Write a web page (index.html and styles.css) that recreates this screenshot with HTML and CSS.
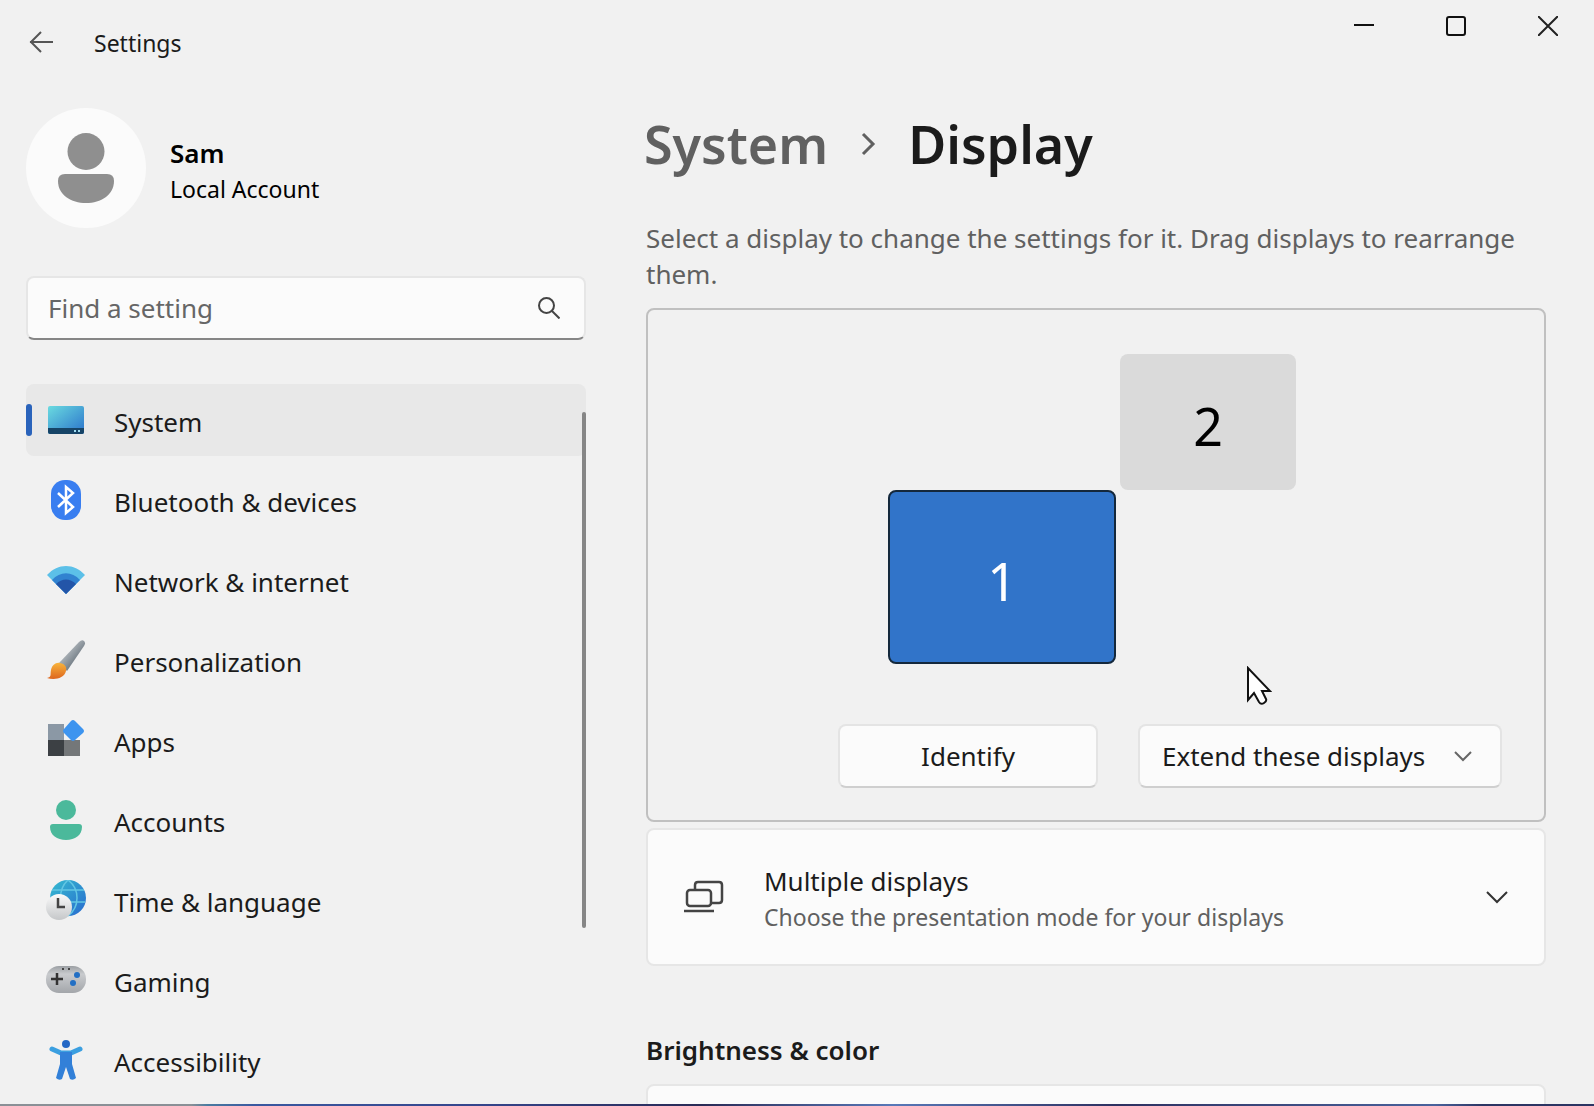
FILE: index.html
```html
<!DOCTYPE html>
<html lang="en">
<head>
    <meta charset="UTF-8">
    <meta name="viewport" content="width=device-width, initial-scale=1.0">
    <title>Settings</title>
    <link rel="stylesheet" href="styles.css">
</head>
<body>

<div class="window">
    <header class="titlebar">
        <button class="back" aria-label="Back">
            <svg width="26" height="24" viewBox="0 0 26 24"><path d="M25 12H2M13 2L3 12l10 10" fill="none" stroke="#555" stroke-width="2"/></svg>
        </button>
        <span class="title">Settings</span>
        <div class="caption">
            <button aria-label="Minimize"><svg width="20" height="20" viewBox="0 0 20 20"><path d="M0 9h20" stroke="#111" stroke-width="2"/></svg></button>
            <button aria-label="Maximize"><svg width="20" height="20" viewBox="0 0 20 20"><rect x="1" y="1" width="18" height="18" rx="2" fill="none" stroke="#111" stroke-width="2"/></svg></button>
            <button aria-label="Close"><svg width="20" height="20" viewBox="0 0 20 20"><path d="M0 0l20 20M20 0L0 20" stroke="#222" stroke-width="2"/></svg></button>
        </div>
    </header>

    <div class="content">
        <aside class="sidebar">
            <div class="account">
                <div class="avatar">
                    <svg width="56" height="70" viewBox="0 0 56 70" fill="#8f8f8f"><circle cx="28" cy="18.500" r="18.500"/><path d="M7 41h42q7 0 7 7c0 14-13 22-28 22S0 62 0 48q0-7 7-7z"/></svg>
                </div>
                <div class="who">
                    <div class="name">Sam</div>
                    <div class="kind">Local Account</div>
                </div>
            </div>

            <div class="search">
                <input type="text" aria-label="Find a setting" placeholder="Find a setting">
                <svg width="22" height="22" viewBox="0 0 22 22" fill="none" stroke="#444" stroke-width="2"><circle cx="8.500" cy="8.500" r="7.500"/><path d="M14 14l7.500 7.500"/></svg>
            </div>

            <nav class="nav">
                <a class="active" href="#system">
                    <svg class="icon" viewBox="0 0 40 40">
                        <defs><linearGradient id="screen" x1="0" y1="0" x2="1" y2="1"><stop offset="0" stop-color="#6adbe0"/><stop offset="1" stop-color="#2a72cb"/></linearGradient></defs>
                        <rect x="2" y="6" width="36" height="28" rx="2" fill="url(#screen)"/>
                        <path d="M2 28h36v4q0 2-2 2H4q-2 0-2-2z" fill="#164467"/>
                        <path d="M28 30h2v2h-2zM32 30h2v2h-2z" fill="#9edcf0"/>
                    </svg>
                    System
                </a>
                <a href="#bluetooth">
                    <svg class="icon" viewBox="0 0 40 40">
                        <rect x="5" y="0" width="30" height="40" rx="14" fill="#397ef0"/>
                        <path d="M12 13l15 14-7 6V7l7 6-15 14" fill="none" stroke="#fff" stroke-width="2.500"/>
                    </svg>
                    Bluetooth &amp; devices
                </a>
                <a href="#network">
                    <svg class="icon" viewBox="0 0 40 40">
                        <path d="M1 15C12 3 28 3 39 15L20 34z" fill="#5cc0e8"/>
                        <path d="M6 20c8-9 20-9 28 0L20 34z" fill="#3182d0"/>
                        <path d="M10 24c6-6 14-6 20 0L20 34z" fill="#2355a8"/>
                    </svg>
                    Network &amp; internet
                </a>
                <a href="#personalization">
                    <svg class="icon" viewBox="0 0 40 40">
                        <defs>
                            <linearGradient id="handle" x1="0" y1="0" x2="1" y2="1"><stop offset="0.300" stop-color="#b5bbc0"/><stop offset="0.700" stop-color="#6c7780"/></linearGradient>
                            <linearGradient id="bristle" x1="0" y1="0" x2="0" y2="1"><stop offset="0" stop-color="#f8b43c"/><stop offset="1" stop-color="#dd661f"/></linearGradient>
                        </defs>
                        <path d="M13 23L33 2q3-3 5-1t0 5L21 31z" fill="url(#handle)"/>
                        <path d="M14 23c5 1 7 4 6 8-2 8-12 9-19 7 5-1 3-3 4-8 1-5 5-8 9-7z" fill="url(#bristle)"/>
                    </svg>
                    Personalization
                </a>
                <a href="#apps">
                    <svg class="icon" viewBox="0 0 40 40">
                        <path d="M2 4h16v16H2z" fill="#8b98a5"/>
                        <path d="M2 20h16v16H2z" fill="#3c4044"/>
                        <path d="M18 20h16v16H18z" fill="#747779"/>
                        <path d="M25 1q2-2 4 0l8 8q2 2 0 4l-8 7q-2 2-4 0l-7-7q-2-2 0-4z" fill="#3d94ef"/>
                    </svg>
                    Apps
                </a>
                <a href="#accounts">
                    <svg class="icon" viewBox="0 0 40 40" fill="#4bb99b">
                        <circle cx="20" cy="10" r="10"/>
                        <path d="M7 24h26q3 0 3 3c0 8-7 13-16 13S4 35 4 27q0-3 3-3z"/>
                    </svg>
                    Accounts
                </a>
                <a href="#time">
                    <svg class="icon" viewBox="0 0 40 40">
                        <defs>
                            <linearGradient id="globe" x1="0" y1="0" x2="1" y2="1"><stop offset="0" stop-color="#36bdd0"/><stop offset="1" stop-color="#2869cf"/></linearGradient>
                            <linearGradient id="clock" x1="0" y1="0" x2="0" y2="1"><stop offset="0" stop-color="#fafafa"/><stop offset="1" stop-color="#c5c7c9"/></linearGradient>
                        </defs>
                        <circle cx="22" cy="18" r="18" fill="url(#globe)"/>
                        <path d="M6 10h32M5 22h34M22 0c-10 9-10 27 0 36M22 0c12 9 12 27 0 36" fill="none" stroke="#62c6e4" stroke-width="1.500"/>
                        <circle cx="13" cy="27" r="13" fill="url(#clock)"/>
                        <path d="M12 18v9h7" fill="none" stroke="#444" stroke-width="2.500"/>
                    </svg>
                    Time &amp; language
                </a>
                <a href="#gaming">
                    <svg class="icon" viewBox="0 0 40 40">
                        <defs><linearGradient id="pad" x1="0" y1="0" x2="0" y2="1"><stop offset="0" stop-color="#9b9fa3"/><stop offset="0.300" stop-color="#c9cbce"/><stop offset="1" stop-color="#a3a6aa"/></linearGradient></defs>
                        <rect x="0" y="6" width="40" height="27" rx="13" fill="url(#pad)"/>
                        <path d="M11 13v12M5 19h12" stroke="#333" stroke-width="2.500"/>
                        <path d="M16 8h2v2h-2zM22 8h2v2h-2z" fill="#444"/>
                        <circle cx="31" cy="15" r="3" fill="#226fc4"/><circle cx="27" cy="23" r="3" fill="#226fc4"/>
                    </svg>
                    Gaming
                </a>
                <a href="#accessibility">
                    <svg class="icon" viewBox="0 0 40 40">
                        <path d="M6 9l9 4h10l9-4" fill="none" stroke="#3b9fe0" stroke-width="5" stroke-linecap="round" stroke-linejoin="round"/>
                        <path d="M14 12h12v12l4 14q-3 3-6 1l-4-12-4 12q-3 2-6-1l4-14z" fill="#3280d8"/>
                        <circle cx="20" cy="4" r="4" fill="#2467c5"/>
                    </svg>
                    Accessibility
                </a>
                <div class="scrollbar"></div>
            </nav>
        </aside>

        <main class="page">
            <h1>
                <a href="#system">System</a>
                <svg width="16" height="24" viewBox="0 0 16 24"><path d="M3 2l10 10L3 22" fill="none" stroke="#606060" stroke-width="3"/></svg>
                <span>Display</span>
            </h1>
            <p class="intro">Select a display to change the settings for it. Drag displays to rearrange them.</p>

            <section class="arrange">
                <div class="canvas">
                    <button class="monitor second">2</button>
                    <button class="monitor first">1</button>
                    <svg class="pointer" width="26" height="40" viewBox="0 0 26 40"><path d="M2 2v32l6-7 5 9q2 3 5 1t2-4l-4-8h8z" fill="#fff" stroke="#111" stroke-width="2"/></svg>
                </div>
                <div class="actions">
                    <button class="identify">Identify</button>
                    <div class="mode">
                        <select aria-label="Display mode">
                            <option>Extend these displays</option>
                            <option>Duplicate these displays</option>
                        </select>
                        <svg width="18" height="12" viewBox="0 0 18 12"><path d="M1 2l8 8 8-8" fill="none" stroke="#666" stroke-width="2"/></svg>
                    </div>
                </div>
            </section>

            <button class="card">
                <svg width="40" height="34" viewBox="0 0 40 34" fill="none" stroke="#444" stroke-width="2.500">
                    <path d="M11 9V5q0-3 3-3h21q3 0 3 3v15q0 3-3 3h-8"/>
                    <rect x="3" y="10" width="24" height="16" rx="3"/>
                    <path d="M0 31h30"/>
                </svg>
                <span class="text">
                    <span class="label">Multiple displays</span>
                    <span class="hint">Choose the presentation mode for your displays</span>
                </span>
                <svg width="22" height="14" viewBox="0 0 22 14"><path d="M1 2l10 10L21 2" fill="none" stroke="#333" stroke-width="2"/></svg>
            </button>

            <h2>Brightness &amp; color</h2>
            <div class="card empty"></div>
        </main>
    </div>
</div>
<div class="desktop"></div>

</body>
</html>
```
FILE: styles.css
```css
* {
    box-sizing: border-box;
}
body {
    margin: 0;
    height: 100vh;
    display: flex;
    flex-direction: column;
    overflow: hidden;
    background: #f1f1f1;
    color: #1b1b1b;
    font-family: "Noto Sans", "Open Sans", sans-serif;
    font-size: 26px;
    line-height: 36px;
}
button, input, select {
    font: inherit;
    color: inherit;
}
button {
    border: none;
    background: none;
    padding: 0;
}
a {
    color: inherit;
    text-decoration: none;
}
svg {
    display: block;
    flex: none;
}
.window {
    flex: 1;
    min-height: 0;
    overflow: hidden;
}

/* title bar */
.titlebar {
    display: flex;
    height: 84px;
    padding-left: 28px;
    align-items: center;
}
.title {
    margin-left: 40px;
    padding-top: 2px;
    font-size: 23px;
}
.caption {
    display: flex;
    margin-left: auto;
    align-self: flex-start;
}
.caption button {
    width: 92px;
    height: 52px;
    display: flex;
    align-items: center;
    justify-content: center;
}

.content {
    display: flex;
    gap: 60px;
    padding: 24px 48px 0 26px;
}

/* left column */
.sidebar {
    flex: 0 0 560px;
}
.account {
    display: flex;
    align-items: center;
    gap: 24px;
    height: 120px;
}
.avatar {
    width: 120px;
    height: 120px;
    border-radius: 50%;
    background: #fbfbfb;
    display: flex;
    align-items: center;
    justify-content: center;
}
.who {
    padding-top: 6px;
}
.name {
    font-size: 26px;
    font-weight: 600;
    color: #000;
}
.kind {
    font-size: 23px;
    color: #000;
}
.search {
    position: relative;
    margin-top: 48px;
}
.search input {
    width: 100%;
    height: 64px;
    padding: 0 60px 0 20px;
    border: 2px solid #e6e6e6;
    border-bottom-color: #868686;
    border-radius: 8px;
    background: #fbfbfb;
}
.search input::placeholder {
    color: #666;
    opacity: 1;
}
.search svg {
    position: absolute;
    right: 26px;
    top: 21px;
}
.nav {
    position: relative;
    display: flex;
    flex-direction: column;
    gap: 8px;
    margin-top: 44px;
}
.nav a {
    position: relative;
    display: flex;
    align-items: center;
    gap: 28px;
    height: 72px;
    padding: 4px 0 0 20px;
    border-radius: 8px;
}
.nav .active {
    background: #e8e8e8;
}
.nav .active::before {
    content: "";
    position: absolute;
    left: 0;
    top: 20px;
    width: 6px;
    height: 32px;
    border-radius: 3px;
    background: #2a63bb;
}
.icon {
    width: 40px;
    height: 40px;
    margin-bottom: 4px;
}
.scrollbar {
    position: absolute;
    right: 0;
    top: 28px;
    width: 4px;
    height: 516px;
    border-radius: 2px;
    background: #868686;
}

/* right column */
.page {
    flex: 1;
    min-width: 0;
}
h1 {
    display: flex;
    align-items: center;
    gap: 32px;
    margin: 0 0 0 -2px;
    font-size: 52px;
    line-height: 72px;
    font-weight: 600;
}
h1 a {
    color: #606060;
}
.intro {
    margin: 40px 0 16px;
    color: #606060;
}
.arrange {
    padding: 44px 42px 32px;
    border: 2px solid #c0c0c0;
    border-radius: 8px;
}
.canvas {
    position: relative;
    width: 416px;
    height: 310px;
    margin: 0 auto;
}
.monitor {
    position: absolute;
    padding-top: 8px;
    border-radius: 8px;
    font-size: 52px;
}
.second {
    left: 232px;
    top: 0;
    width: 176px;
    height: 136px;
    background: #dadada;
    color: #000;
}
.first {
    left: 0;
    top: 136px;
    width: 228px;
    height: 174px;
    border: 2px solid #14283c;
    background: #3174c9;
    color: #fff;
}
.pointer {
    position: absolute;
    left: 358px;
    top: 312px;
}
.actions {
    display: flex;
    justify-content: flex-end;
    gap: 40px;
    margin-top: 60px;
}
.identify, .mode select {
    height: 64px;
    border: 2px solid #e4e4e4;
    border-bottom-color: #cfcfcf;
    border-radius: 8px;
    background: #fbfbfb;
}
.identify {
    width: 260px;
}
.mode {
    position: relative;
}
.mode select {
    appearance: none;
    width: 364px;
    padding: 0 60px 0 22px;
}
.mode svg {
    position: absolute;
    right: 30px;
    top: 26px;
    pointer-events: none;
}
.card {
    display: flex;
    align-items: center;
    width: 100%;
    height: 138px;
    margin-top: 6px;
    padding: 0 36px;
    border: 2px solid #e6e6e6;
    border-radius: 8px;
    background: #fbfbfb;
    text-align: left;
}
.text {
    flex: 1;
    margin-left: 40px;
    padding-top: 4px;
}
.label, .hint {
    display: block;
}
.hint {
    font-size: 23px;
    color: #606060;
}
h2 {
    margin: 66px 0 0;
    font-size: 26px;
    font-weight: 600;
}
.empty {
    margin-top: 16px;
}

/* sliver of wallpaper under the window */
.desktop {
    flex: none;
    height: 2px;
    background: linear-gradient(90deg, #8a9096 0, #8a9096 12%, #4a7ba0 13%, #3a58a0 16%, #35458c 30%, #292a55 44%, #5878b8 56%, #2d3060 70%, #49629c 90%, #2c3563 93%);
}
```
